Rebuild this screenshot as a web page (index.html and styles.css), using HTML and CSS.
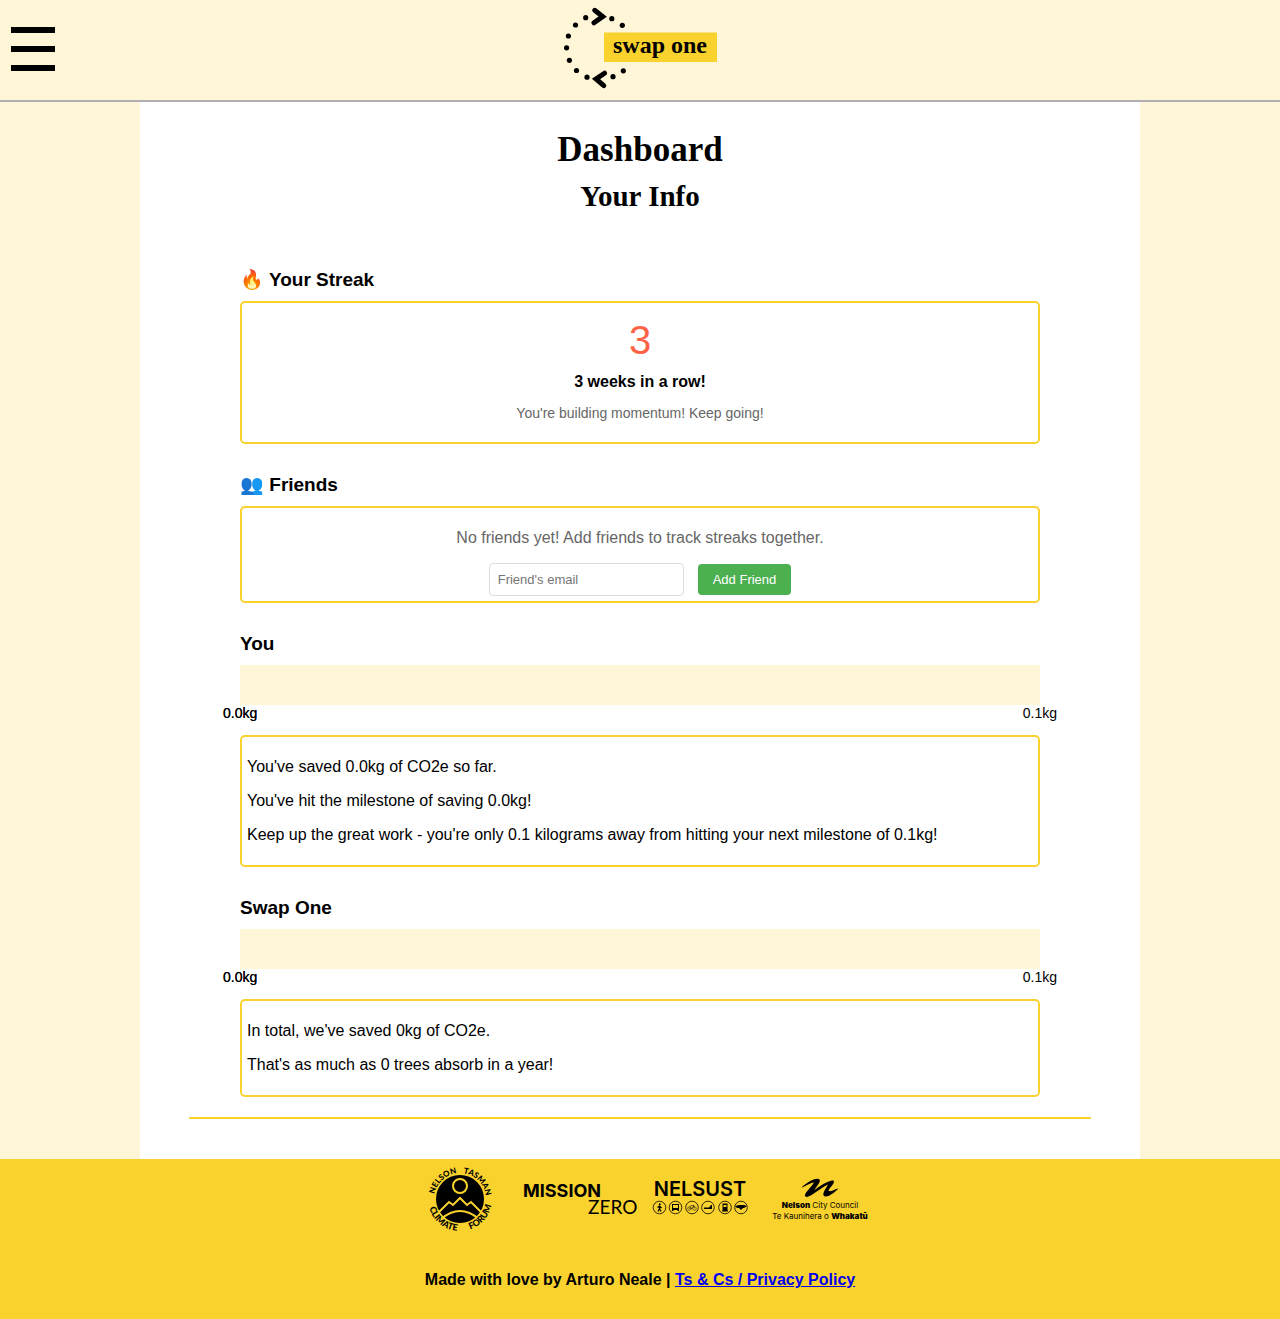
FILE: index.html
```html
<!DOCTYPE html>
<html lang="en">
<head>
<meta charset="utf-8">
<meta name="viewport" content="width=device-width, initial-scale=1">
<title>Swap One - Dashboard</title>
<link rel="stylesheet" href="styles.css">
</head>
<body>
<header class="site-header">
  <button class="menu-button" type="button" aria-label="Open menu">
    <svg width="44" height="46" viewBox="0 0 44 46" aria-hidden="true"><path d="M0 0h44v6H0zM0 19h44v6H0zM0 38h44v6H0z"/></svg>
  </button>
  <a class="home-link" href="#" aria-label="Swap One home">
    <svg width="180" height="100" viewBox="550 0 180 100">
      <g>
        <circle cx="585.7" cy="17.7" r="2.6"/><circle cx="575.5" cy="25" r="2.6"/><circle cx="568.4" cy="36" r="2.6"/><circle cx="566.6" cy="47.8" r="2.6"/><circle cx="569.4" cy="60.3" r="2.6"/><circle cx="576.5" cy="70.5" r="2.6"/><circle cx="587" cy="77.2" r="2.6"/>
        <circle cx="611.8" cy="18.7" r="2.6"/><circle cx="622.3" cy="25.3" r="2.6"/><circle cx="613" cy="76.7" r="2.6"/><circle cx="623.3" cy="70.8" r="2.6"/>
      </g>
      <path class="logo-arrow" d="M594.7 10.3L602.700 16.6L594 22.8M604.5 73.2L596 79L603.8 85.6"/>
      <rect class="logo-plate" x="604" y="32.500" width="113" height="29.500"/>
      <text class="logo-word" x="660" y="53" text-anchor="middle">swap one</text>
    </svg>
  </a>
</header>

<main class="page">
  <h1 class="page-title">Dashboard</h1>
  <h2 class="page-subtitle">Your Info</h2>

  <div class="content">
    <section>
      <h3 class="section-title">🔥 Your Streak</h3>
      <div class="card card-center">
        <div class="streak-count">3</div>
        <div class="streak-label">3 weeks in a row!</div>
        <div class="streak-note">You're building momentum! Keep going!</div>
      </div>
    </section>

    <section>
      <h3 class="section-title">👥 Friends</h3>
      <div class="card card-center">
        <p class="muted">No friends yet! Add friends to track streaks together.</p>
        <form class="friend-form">
          <input class="friend-email" type="email" placeholder="Friend's email" aria-label="Friend's email">
          <button class="friend-add" type="button">Add Friend</button>
        </form>
      </div>
    </section>

    <section>
      <h3 class="section-title">You</h3>
      <div class="progress"></div>
      <div class="scale">
        <div class="scale-start"><span>0.0kg</span><span>0.0kg</span></div>
        <span>0.1kg</span>
      </div>
      <div class="card">
        <p>You've saved 0.0kg of CO2e so far.</p>
        <p>You've hit the milestone of saving 0.0kg!</p>
        <p>Keep up the great work - you're only 0.1 kilograms away from hitting your next milestone of 0.1kg!</p>
      </div>
    </section>

    <section>
      <h3 class="section-title">Swap One</h3>
      <div class="progress"></div>
      <div class="scale">
        <div class="scale-start"><span>0.0kg</span><span>0.0kg</span></div>
        <span>0.1kg</span>
      </div>
      <div class="card">
        <p>In total, we've saved 0kg of CO2e.</p>
        <p>That's as much as 0 trees absorb in a year!</p>
      </div>
    </section>
  </div>
  <hr class="divider">
</main>

<footer class="site-footer">
  <div class="partners">
    <svg width="110" height="80" viewBox="-55 -40 110 80" role="img" aria-label="Nelson Tasman Climate Forum">
      <defs>
        <path id="arc-top" d="M-26 0A26 26 0 0 1 26 0"/>
        <path id="arc-bottom" d="M-32 0A32 32 0 0 0 32 0"/>
      </defs>
      <circle r="24"/>
      <g class="forum-line">
        <circle cy="-13" r="7"/>
        <path d="M-22 14L-11 3L-7 6L0 -1L7 6L11 3L22 14M-19 20Q0 4 19 20"/>
      </g>
      <g class="forum-text" text-anchor="middle">
        <text><textPath href="#arc-top" startOffset="26%">NELSON</textPath></text>
        <text><textPath href="#arc-top" startOffset="75%">TASMAN</textPath></text>
        <text class="forum-low"><textPath href="#arc-bottom" startOffset="28%">CLIMATE</textPath></text>
        <text class="forum-low"><textPath href="#arc-bottom" startOffset="77%">FORUM</textPath></text>
      </g>
    </svg>
    <svg width="130" height="80" viewBox="515 1159 130 80">
      <text class="mission" x="523" y="1197">MISSION</text>
      <text class="zero" x="588" y="1214">ZERO</text>
    </svg>
    <svg width="110" height="80" viewBox="645 1159 110 80">
      <text class="nelsust" x="700" y="1196" text-anchor="middle">NELSUST</text>
      <g class="ring">
        <circle cx="659.500" cy="1207.500" r="6.300"/><circle cx="675.500" cy="1207.500" r="6.300"/><circle cx="692" cy="1207.500" r="6.300"/><circle cx="708" cy="1207.500" r="6.300"/><circle cx="725" cy="1207.500" r="6.300"/><circle cx="741" cy="1207.500" r="6.300"/>
      </g>
      <g class="bike">
        <circle cx="689.500" cy="1208.500" r="1.800"/><circle cx="694.500" cy="1208.500" r="1.800"/><path d="M689.500 1208.500L691 1205.500H694L692 1208.500H689.500M693.500 1205L694.500 1208.500"/>
      </g>
      <circle cx="659.800" cy="1204.300" r="1"/>
      <path class="walker" d="M659.500 1205.500V1208.500L658 1211.500M659.500 1208.500L661 1211.500M657.500 1207.500L659.500 1206L661.500 1208"/>
      <path fill-rule="evenodd" d="M672 1204H679V1211H677.500V1210H673.500V1211H672ZM673 1205V1208H678V1205Z"/>
      <path d="M704 1207.500H709L711 1205H712V1209H704ZM735 1206L739 1205H744L747 1206L744 1208H737ZM739 1208H743L741 1210Z"/>
      <path fill-rule="evenodd" d="M722.500 1203.500H727.500V1209.500L728 1211.500H722L722.500 1209.500ZM723.500 1205V1207H726.500V1205Z"/>
    </svg>
    <svg width="120" height="80" viewBox="755 1159 120 80">
      <path d="M801.500 1187.500C808 1182 814 1178 818.500 1179C822 1180 818.500 1184 814 1190.500C820 1185.500 829 1180 833.500 1180.500C835.500 1183 830 1187 828.500 1190.500C831 1193 836 1188 838.500 1188.500C834 1193 829 1197 825 1196.500C821 1195 825 1190 828 1184.500C819 1189 812 1196 807 1197C801 1196 810 1189 814 1182.500C809 1183 805 1187 801.500 1187.500Z"/>
      <g class="council" text-anchor="middle">
        <text x="820" y="1208"><tspan class="strong">Nelson</tspan> City Council</text>
        <text x="820" y="1219">Te Kaunihera o <tspan class="strong">Whakatū</tspan></text>
      </g>
    </svg>
  </div>
  <p class="credits">Made with love by Arturo Neale | <a href="#">Ts &amp; Cs / Privacy Policy</a></p>
</footer>
</body>
</html>
```
FILE: styles.css
```css
* {
  box-sizing: border-box;
}

body {
  margin: 0;
  background: #fff5d7;
  color: #000;
  font: 16px/18px "Liberation Sans", Arial, sans-serif;
}

.site-header {
  display: grid;
  grid-template-columns: 1fr auto 1fr;
  align-items: center;
  border-bottom: 2px solid #b1afb5;
}

.site-header svg,
.partners svg {
  display: block;
}

.menu-button {
  justify-self: start;
  padding: 0 11px;
  border: 0;
  background: none;
  cursor: pointer;
}

.logo-arrow {
  fill: none;
  stroke: #000;
  stroke-width: 5;
  stroke-linecap: round;
}

.logo-plate {
  fill: #fad22d;
}

.logo-word {
  font: bold 24px "Liberation Serif", serif;
}

.page {
  max-width: 1000px;
  margin: 0 auto;
  padding: 28px 49px 40px;
  background: #fff;
}

.page-title,
.page-subtitle {
  margin: 0;
  font-family: "Liberation Serif", "Times New Roman", serif;
  text-align: center;
}

.page-title {
  font-size: 35px;
  line-height: 40px;
}

.page-subtitle {
  margin-top: 10px;
  font-size: 29px;
  line-height: 32px;
}

.content {
  max-width: 800px;
  margin: 57px auto 20px;
}

.section-title {
  margin: 30px 0 10px;
  font-size: 19px;
  line-height: 22px;
}

.card {
  padding: 5px;
  border: 2px solid #fad22d;
  border-radius: 5px;
}

.card p {
  margin: 16px 0;
}

.card-center {
  text-align: center;
}

.streak-count {
  margin-top: 9px;
  color: #ff6347;
  font-size: 40px;
  line-height: 46px;
}

.streak-label {
  margin: 10px 0 14px;
  font-weight: bold;
}

.streak-note {
  margin-bottom: 16px;
  color: #666;
  font-size: 14px;
  line-height: 16px;
}

.muted {
  color: #666;
}

.friend-form {
  display: flex;
  justify-content: center;
  align-items: center;
  gap: 14px;
}

.friend-email,
.friend-add {
  border-radius: 4px;
  font: 13px/15px "Liberation Sans", Arial, sans-serif;
}

.friend-email {
  width: 195px;
  padding: 8px;
  border: 1px solid #ddd;
}

.friend-add {
  padding: 8px 15px;
  border: 0;
  background: #4caf50;
  color: #fff;
  cursor: pointer;
}

.progress {
  height: 40px;
  background: #fff5d7;
}

.scale {
  display: flex;
  justify-content: space-between;
  margin: 0 -17px 14px;
  font-size: 14px;
  line-height: 16px;
}

.scale-start {
  display: grid;
}

.scale-start span {
  grid-area: 1 / 1;
}

.divider {
  margin: 0;
  border: 0;
  border-top: 2px solid #fad22d;
}

.site-footer {
  padding-bottom: 30px;
  background: #fad22d;
}

.partners {
  display: flex;
  justify-content: center;
}

.credits {
  margin: 32px 0 0;
  font-weight: bold;
  text-align: center;
}

.credits a {
  color: #0000ee;
}

.forum-line {
  fill: none;
  stroke: #fad22d;
  stroke-width: 2;
}

.forum-text {
  font: 900 8px Lato, sans-serif;
}

.forum-low {
  font-size: 9px;
}

.mission {
  font: bold 18px Inter, sans-serif;
}

.zero {
  font: 19px Lato, sans-serif;
}

.nelsust {
  font: 600 20px Inter, sans-serif;
}

.ring,
.bike,
.walker {
  fill: none;
  stroke: #000;
  stroke-width: 0.8;
}

.bike {
  stroke-width: 0.5;
}

.walker {
  stroke-width: 1.2;
}

.council {
  font: 8px Inter, sans-serif;
}

.strong {
  font-weight: 900;
}
```
